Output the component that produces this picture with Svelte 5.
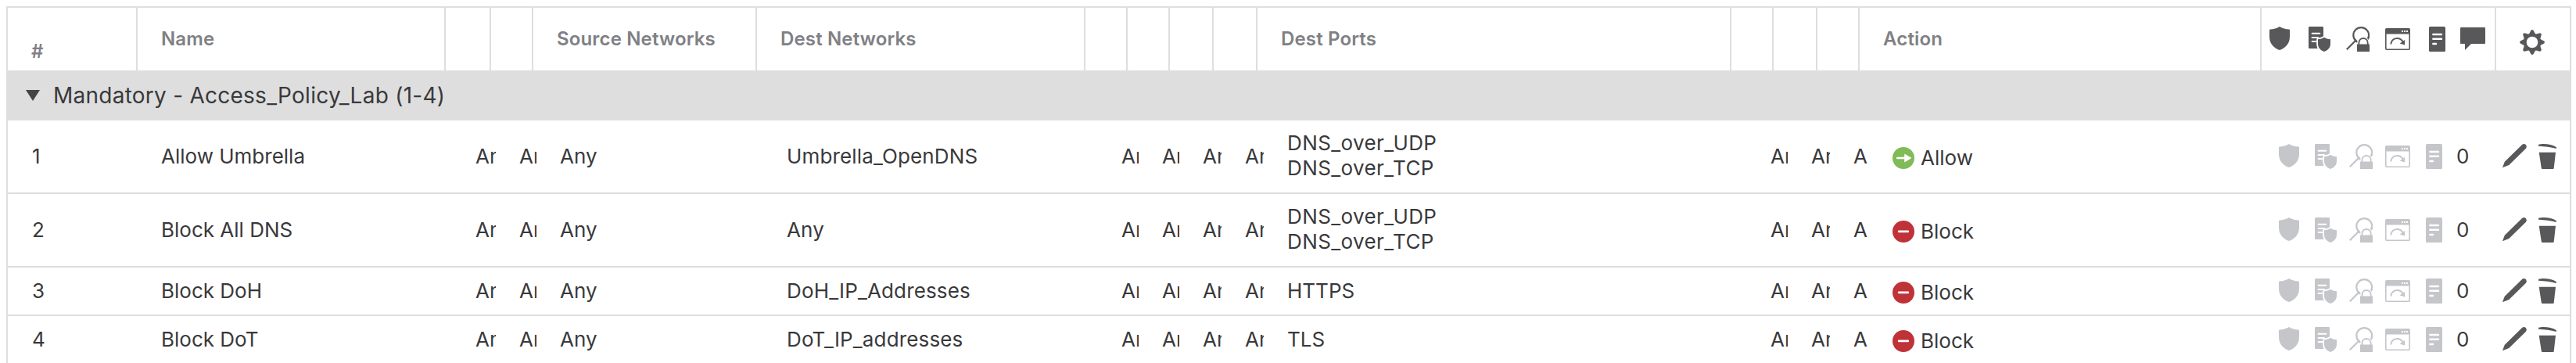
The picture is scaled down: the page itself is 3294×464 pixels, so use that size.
<script>
  const headers = [
    { key: 'name', label: 'Name' },
    { key: 'srcZone' },
    { key: 'dstZone' },
    { key: 'srcNet', label: 'Source Networks' },
    { key: 'dstNet', label: 'Dest Networks' },
    { key: 'vlan' },
    { key: 'users' },
    { key: 'apps' },
    { key: 'srcPorts' },
    { key: 'dstPorts', label: 'Dest Ports' },
    { key: 'urls' },
    { key: 'srcAttr' },
    { key: 'dstAttr' },
    { key: 'action', label: 'Action' },
  ];

  const rules = [
    { id: 1, name: 'Allow Umbrella', dest: 'Umbrella_OpenDNS', ports: ['DNS_over_UDP', 'DNS_over_TCP'], action: 'Allow' },
    { id: 2, name: 'Block All DNS', dest: 'Any', ports: ['DNS_over_UDP', 'DNS_over_TCP'], action: 'Block' },
    { id: 3, name: 'Block DoH', dest: 'DoH_IP_Addresses', ports: ['HTTPS'], action: 'Block' },
    { id: 4, name: 'Block DoT', dest: 'DoT_IP_addresses', ports: ['TLS'], action: 'Block' },
  ];
</script>

{#snippet shield()}
  <svg width="26" height="32" viewBox="0 0 26 32" fill="currentColor">
    <path d="M13 0C9.500 2.400 5 3.300 1 3.500Q0 3.600 0 4.700V13C0 21.500 5.500 27.700 13 30C20.500 27.700 26 21.500 26 13V4.700Q26 3.600 25 3.500C21 3.300 16.500 2.400 13 0Z" />
  </svg>
{/snippet}

{#snippet docShield()}
  <svg width="28" height="32" viewBox="0 0 28 32" fill="currentColor">
    <rect width="19" height="28" rx="1.200" />
    <path d="M4.600 8.800H14.300M4.600 13.900H12M4.600 19H9.500" stroke="#fff" stroke-width="2" stroke-linecap="round" />
    <path d="M20 13.700C17.500 15.300 15 15.900 12.600 16.100Q12 16.200 12 17V22C12 27 15.500 30.600 20 32C24.500 30.600 28 27 28 22V17Q28 16.200 27.400 16.100C25 15.900 22.500 15.300 20 13.700Z" stroke="#fff" stroke-width="3.600" paint-order="stroke" />
  </svg>
{/snippet}

{#snippet inspect()}
  <svg width="30" height="32" viewBox="0 0 30 32" fill="none" stroke="currentColor">
    <circle cx="19.200" cy="11" r="9.900" stroke-width="2.200" />
    <path d="M.8 29.300L12.800 17.300" stroke-width="2.200" />
    <path d="M10.700 17.800L12.600 16L14 18.200L12.600 19.300Z" fill="currentColor" stroke="none" />
    <path d="M14 32V22H14.800C15 11.500 29.200 11.500 29 22H31V32Z" fill="#fff" stroke="#fff" stroke-width="2" />
    <path d="M29 8.500Q29.500 12 28.600 14.600" stroke-width="2" />
    <path d="M16.400 23V21C16.400 13 27.700 13 27.700 21V23" stroke-width="1.800" />
    <path d="M14 22.500H30V32H14Z" fill="currentColor" stroke="none" />
  </svg>
{/snippet}

{#snippet page()}
  <svg width="32" height="32" viewBox="0 -2 32 32" fill="none" stroke="currentColor">
    <rect x=".8" y=".8" width="30.400" height="26.400" rx="1" stroke-width="1.600" />
    <path d="M.8 1H31.200V7.500H.8Z" fill="currentColor" stroke="none" />
    <path d="M21 3H23V5H21ZM24 3H26V5H24ZM27 3H29V5H27Z" fill="#fff" stroke="none" />
    <path d="M7.200 20.500C8.500 11.500 18.800 10.700 23 18" stroke-width="1.900" />
    <path d="M25 15V21.500L18.600 19.500Z" fill="currentColor" stroke="none" />
  </svg>
{/snippet}

{#snippet log()}
  <svg width="21" height="32" viewBox="0 0 21 32" fill="currentColor">
    <rect width="21" height="32" rx="1.500" />
    <path d="M5.300 10H16M5.300 15.800H16M5.300 22H9" stroke="#fff" stroke-width="2.400" stroke-linecap="round" />
  </svg>
{/snippet}

<div class="policy">
  <div class="head">
    <div class="cell num">#</div>
    {#each headers as h (h.key)}
      <div class="cell">{h.label ?? ''}</div>
    {/each}
    <div class="cell icons">
      {@render shield()}
      {@render docShield()}
      {@render inspect()}
      {@render page()}
      {@render log()}
      <svg width="32" height="32" viewBox="0 -1 32 32" fill="currentColor">
        <path d="M1 0H31Q32 0 32 1V20Q32 21 31 21H14L6 29V21H1Q0 21 0 20V1Q0 0 1 0Z" />
      </svg>
    </div>
    <div class="cell gear">
      <svg width="32" height="32" viewBox="-16 -16 32 32" fill="currentColor">
        {#each [0, 45, 90, 135, 180, 225, 270, 315] as a}
          <path d="M-4.600 -9.500L-1.500 -15.200Q0 -16.600 1.500 -15.200L4.600 -9.500Z" transform="rotate({a})" />
        {/each}
        <circle r="9.300" fill="none" stroke="currentColor" stroke-width="4" />
      </svg>
    </div>
  </div>

  <div class="group">
    <svg width="18" height="14" viewBox="0 0 18 14"><path d="M0 0H18L9 14Z" fill="#444" /></svg>
    <span>Mandatory - Access_Policy_Lab (1-4)</span>
  </div>

  {#each rules as r (r.id)}
    <div class="row" class:tall={r.ports.length > 1}>
      <div>{r.id}</div>
      <div>{r.name}</div>
      <div class="clip w26">Any</div>
      <div class="clip">Any</div>
      <div>Any</div>
      <div class="dest">{r.dest}</div>
      <div class="clip">Any</div>
      <div class="clip">Any</div>
      <div class="clip w24">Any</div>
      <div class="clip w24">Any</div>
      <div class:ports={r.ports.length > 1}>
        {#each r.ports as p}<p>{p}</p>{/each}
      </div>
      <div class="clip">Any</div>
      <div class="clip w24">Any</div>
      <div class="clip w18">Any</div>
      <div class="action">
        <svg width="28" height="28" viewBox="0 0 28 28">
          {#if r.action === 'Allow'}
            <circle cx="14" cy="14" r="14" fill="#80bb57" />
            <path d="M6.200 14H16" stroke="#fff" stroke-width="2.600" stroke-linecap="round" />
            <path d="M15.500 9L24 14L15.500 19Z" fill="#fff" stroke="#fff" stroke-width=".6" stroke-linejoin="round" />
          {:else}
            <circle cx="14" cy="14" r="14" fill="#bf3237" />
            <path d="M8.200 13.900H19.800" stroke="#fff" stroke-width="2.800" stroke-linecap="round" />
          {/if}
        </svg>
        <span>{r.action}</span>
      </div>
      <div class="flags">
        {@render shield()}
        {@render docShield()}
        {@render inspect()}
        {@render page()}
        {@render log()}
        <span>0</span>
      </div>
      <div class="tools">
        <svg width="31" height="32" viewBox="0 0 31 32" fill="currentColor">
          <path d="M0 30.300L2.800 22.700L25 1Q27 -.7 29.600 .8Q31.600 3 30 5.800L8.300 27Z" />
        </svg>
        <svg width="23" height="32" viewBox="0 0 23 32" fill="currentColor">
          <path d="M0 .8C6 -.8 17 0 23 4.200L22.600 6C16 4.200 8 3 0 2.700ZM.7 10.700H22L19.700 31Q19.600 32 18.600 32H5Q4 32 3.800 31Z" />
        </svg>
      </div>
    </div>
  {/each}
</div>

<style>
  :global(body) {
    background: #fff;
    overflow: hidden;
  }

  .policy {
    box-sizing: border-box;
    width: 3280px;
    height: 456px;
    margin: 8px 0 0 8px;
    border: 2px solid #dedede;
    border-bottom: 0;
    overflow: hidden;
    color: #39393b;
    font: 400 26px/32px Inter, 'Liberation Sans', sans-serif;
  }

  svg {
    display: block;
    flex: none;
  }

  .head {
    display: grid;
    grid-template-columns: 166px 394px 58px 54px 286px 420px 54px 54px 56px 56px 606px 54px 56px 54px 514px 300px 94px;
    height: 80px;
    color: #808085;
    font-size: 24px;
    font-weight: 600;
    letter-spacing: 0.15px;
  }

  .cell {
    box-sizing: border-box;
    padding: 24px 0 0 30px;
    border-right: 2px solid #dedede;
    white-space: nowrap;
    overflow: hidden;
  }

  .cell:last-child {
    border-right: 0;
  }

  .cell.num {
    padding: 40px 0 0 30px;
  }

  .cell.icons {
    display: flex;
    padding: 24px 0 0 10px;
    color: #58585b;
  }

  .icons :global(svg:nth-child(2)) { margin-left: 24px; }
  .icons :global(svg:nth-child(3)) { margin-left: 20px; }
  .icons :global(svg:nth-child(4)) { margin-left: 20px; }
  .icons :global(svg:nth-child(5)) { margin-left: 24px; }
  .icons :global(svg:nth-child(6)) { margin-left: 19px; }

  .cell.gear {
    padding: 28px 0 0 30px;
    color: #58585b;
  }

  .group {
    display: flex;
    align-items: center;
    gap: 17px;
    height: 64px;
    padding-left: 23px;
    background: #dedede;
    font-size: 28px;
    letter-spacing: 0.25px;
  }

  .row {
    display: grid;
    grid-template-columns: 165px 402px 56px 52px 290px 428px 52px 52px 54px 54px 618px 52px 54px 50px 494px 286px 1fr;
    align-items: center;
    height: 60px;
    padding-left: 31px;
    border-bottom: 2px solid #dedede;
    white-space: nowrap;
  }

  .row.tall {
    height: 92px;
  }

  .row > div:not(.action, .flags, .tools) {
    padding-bottom: 1px;
  }

  .row > div.ports:not(.action) {
    padding-bottom: 2px;
    letter-spacing: 0.4px;
  }

  .dest {
    letter-spacing: 0.15px;
  }

  .clip {
    width: 22px;
    overflow: hidden;
  }

  .w26 { width: 26px; }
  .w24 { width: 24px; }
  .w18 { width: 18px; }

  p {
    margin: 0;
  }

  .action {
    display: flex;
    align-items: center;
    gap: 8px;
    padding-top: 4px;
  }

  .flags {
    display: flex;
    align-items: center;
    color: #c5c6ca;
  }

  .flags :global(svg:nth-child(2)) { margin-left: 20px; }
  .flags :global(svg:nth-child(3)) { margin-left: 16px; }
  .flags :global(svg:nth-child(4)) { margin-left: 16px; }
  .flags :global(svg:nth-child(5)) { margin-left: 20px; }

  .flags span {
    margin-left: 18px;
    padding-bottom: 1px;
    color: #39393b;
  }

  .tools {
    display: flex;
    gap: 15px;
    color: #58585b;
  }
</style>
